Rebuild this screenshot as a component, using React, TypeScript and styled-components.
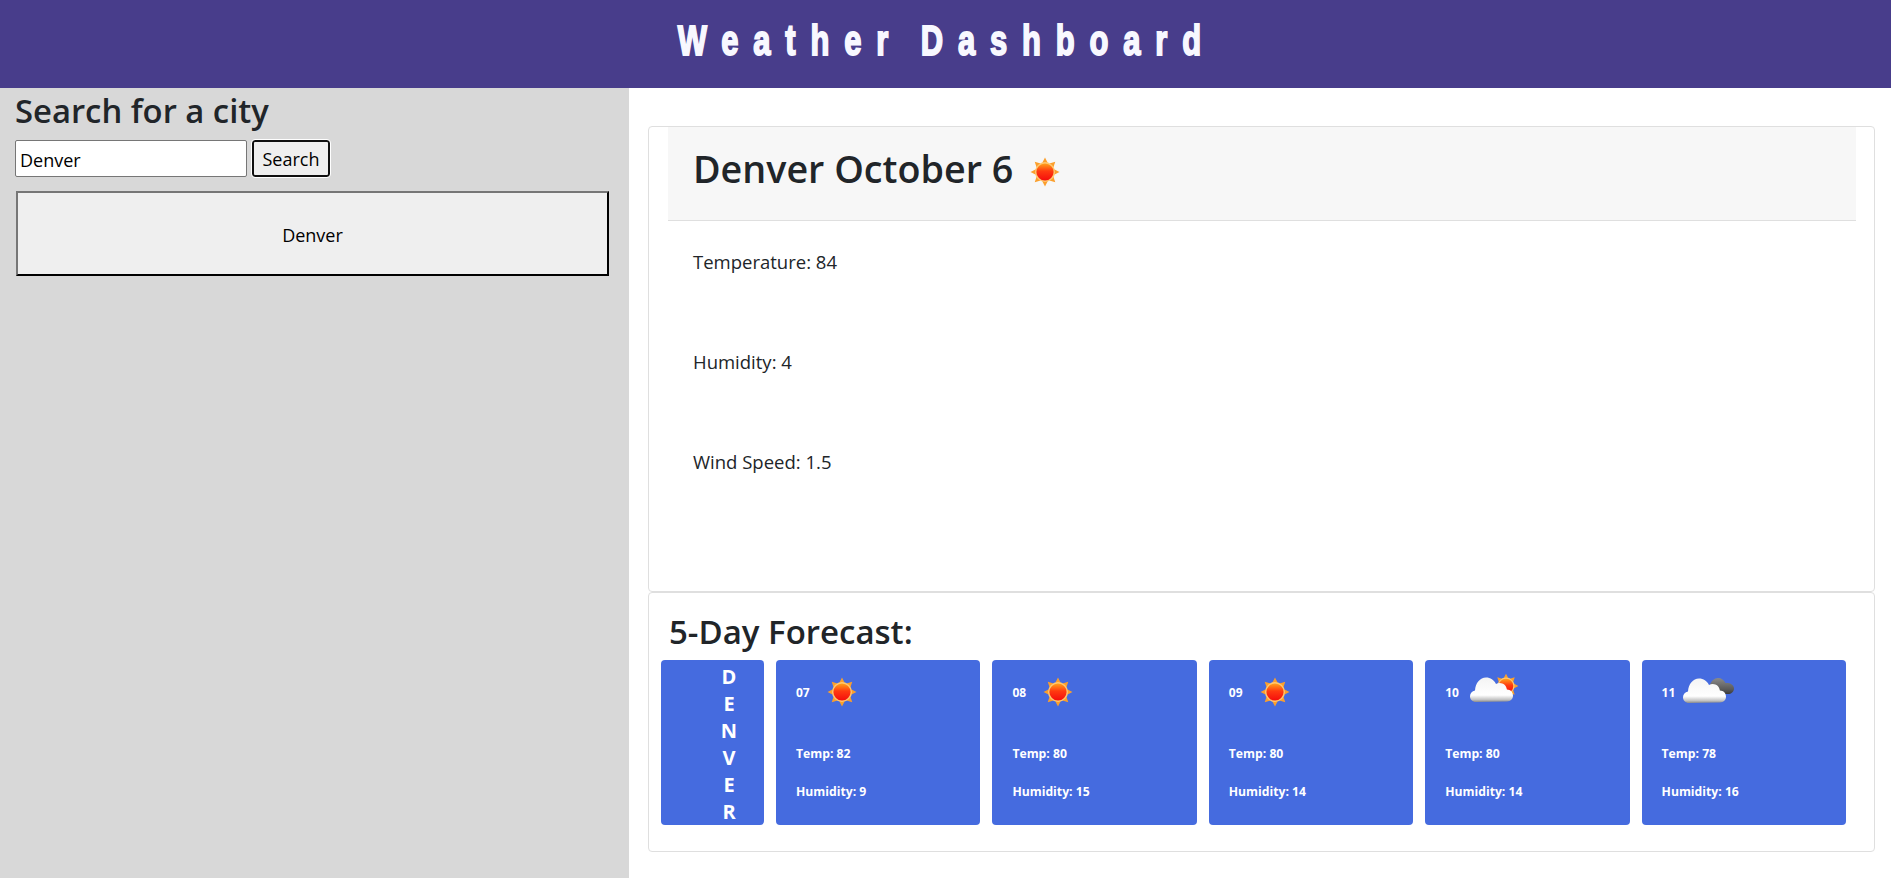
import React, { useId } from 'react';
import styled, { createGlobalStyle } from 'styled-components';

type Day = {
  date: string;
  icon: 'sun' | 'fewClouds' | 'brokenClouds';
  temp: number;
  humidity: number;
};

const days: Day[] = [
  { date: '07', icon: 'sun', temp: 82, humidity: 9 },
  { date: '08', icon: 'sun', temp: 80, humidity: 15 },
  { date: '09', icon: 'sun', temp: 80, humidity: 14 },
  { date: '10', icon: 'fewClouds', temp: 80, humidity: 14 },
  { date: '11', icon: 'brokenClouds', temp: 78, humidity: 16 },
];

const sunRays = (cx: number, cy: number, inner: number, outer: number, half: number) =>
  Array.from({ length: 8 }, (_, i) => {
    const a = (i * Math.PI) / 4;
    const tip = [cx + Math.cos(a) * outer, cy + Math.sin(a) * outer];
    const l = [cx + Math.cos(a - half) * inner, cy + Math.sin(a - half) * inner];
    const r = [cx + Math.cos(a + half) * inner, cy + Math.sin(a + half) * inner];
    return `${tip[0]},${tip[1]} ${l[0]},${l[1]} ${r[0]},${r[1]}`;
  });

const CLOUD =
  'M7 36c-3.500 0-6-2.600-6-5.800 0-3 2-5.200 5-5.800C6.500 17 11 11.500 17 11.500c4.500 0 8 2.500 10 6.500 1.200-.6 2.500-.9 3.700-.9 3.800 0 6.800 2.800 7.200 6.500 3.700 0 6.100 2.800 6.100 6.200 0 3.200-2.500 5.700-6 5.700z';

const Sun: React.FC<{ cx?: number; cy?: number; scale?: number }> = ({ cx = 25, cy = 25, scale = 1 }) => {
  const id = useId();
  return (
    <g>
      <defs>
        <linearGradient id={id} x1="0" y1="0" x2="0" y2="1">
          <stop offset="0" stopColor="#ffa31a" />
          <stop offset="0.45" stopColor="#ff3a10" />
          <stop offset="1" stopColor="#f40d0d" />
        </linearGradient>
      </defs>
      {sunRays(cx, cy, 9.5 * scale, 14.5 * scale, 0.3).map((points) => (
        <polygon key={points} points={points} fill="#fb9f2c" />
      ))}
      <circle cx={cx} cy={cy} r={10 * scale} fill="#ffc870" />
      <circle cx={cx} cy={cy} r={8.6 * scale} fill={`url(#${id})`} />
    </g>
  );
};

const WeatherIcon: React.FC<{ kind: Day['icon'] }> = ({ kind }) => {
  const id = useId();
  const darkId = useId();
  return (
    <Icon viewBox="0 0 50 50" aria-hidden="true">
      <defs>
        <linearGradient id={id} x1="0" y1="0" x2="0" y2="1">
          <stop offset="0" stopColor="#f4f4f4" />
          <stop offset="0.72" stopColor="#ffffff" />
          <stop offset="0.9" stopColor="#c4c4c4" />
          <stop offset="1" stopColor="#8b8b8b" />
        </linearGradient>
        <linearGradient id={darkId} x1="0" y1="0" x2="0" y2="1">
          <stop offset="0" stopColor="#8a8a8a" />
          <stop offset="0.7" stopColor="#5a5a5a" />
          <stop offset="1" stopColor="#3a3a3a" />
        </linearGradient>
      </defs>
      {kind === 'sun' && <Sun />}
      {kind === 'fewClouds' && (
        <>
          <Sun cx={40} cy={19} scale={0.85} />
          <path d={CLOUD} fill={`url(#${id})`} transform="translate(3 -1)" />
        </>
      )}
      {kind === 'brokenClouds' && (
        <>
          <path
            d="M30 27c-2-3-3-6-2-9 1-4 4.500-7 8-7 3.500 0 6 2 7.500 5 4-.5 8.500 1.500 8.500 5.500 0 3.500-3 5.500-6 5.500z"
            fill={`url(#${darkId})`}
          />
          <path d={CLOUD} fill={`url(#${id})`} />
        </>
      )}
    </Icon>
  );
};

const App: React.FC = () => {
  return (
    <>
      <GlobalStyle />
      <Header>
        <Title>Weather Dashboard</Title>
      </Header>
      <Main>
        <Sidebar>
          <SearchTitle>Search for a city</SearchTitle>
          <SearchForm>
            <SearchInput defaultValue="Denver" />
            <SearchButton type="button">Search</SearchButton>
          </SearchForm>
          <HistoryButton type="button">Denver</HistoryButton>
        </Sidebar>
        <Content>
          <CurrentCard>
            <CurrentHeader>
              <CityTitle>Denver October 6</CityTitle>
              <HeroIcon>
                <WeatherIcon kind="sun" />
              </HeroIcon>
            </CurrentHeader>
            <CurrentBody>
              <Stat>Temperature: 84</Stat>
              <Stat>Humidity: 4</Stat>
              <Stat>Wind Speed: 1.5</Stat>
            </CurrentBody>
          </CurrentCard>
          <ForecastCard>
            <ForecastTitle>5-Day Forecast:</ForecastTitle>
            <ForecastRow>
              <CityCard>
                {'DENVER'.split('').map((letter, i) => (
                  <span key={i}>{letter}</span>
                ))}
              </CityCard>
              {days.map((day) => (
                <DayCard key={day.date}>
                  <DayTop>
                    <DayDate>{day.date}</DayDate>
                    <WeatherIcon kind={day.icon} />
                  </DayTop>
                  <DayStat>Temp: {day.temp}</DayStat>
                  <DayStat>Humidity: {day.humidity}</DayStat>
                </DayCard>
              ))}
            </ForecastRow>
          </ForecastCard>
        </Content>
      </Main>
    </>
  );
};

export default App;

const GlobalStyle = createGlobalStyle`
  * {
    box-sizing: border-box;
  }

  body {
    margin: 0;
    background: #fff;
    color: #212529;
    font-family: "Open Sans", "Noto Sans", sans-serif;
    overflow: hidden;
  }
`;

const Header = styled.header`
  height: 88px;
  padding-bottom: 7px;
  background: #483d8b;
  display: flex;
  justify-content: center;
  align-items: center;
`;

const Title = styled.h1`
  margin: 0 0 0 2px;
  color: #f8f8ff;
  font-family: "Liberation Sans", sans-serif;
  font-size: 43px;
  font-weight: 700;
  letter-spacing: 20.6px;
  word-spacing: -8px;
  -webkit-text-stroke: 1.9px #f8f8ff;
  white-space: nowrap;
  transform: scaleX(0.72);
`;

const Main = styled.div`
  display: grid;
  grid-template-columns: 629px 1fr;
  height: 790px;
`;

const Sidebar = styled.aside`
  background: #d8d8d8;
  padding: 1px 19px 0 15px;
`;

const SearchTitle = styled.h3`
  margin: 0 0 7px;
  font-size: 32.8px;
  line-height: 44px;
  font-weight: 600;
`;

const SearchForm = styled.form`
  display: flex;
  align-items: center;
  gap: 5px;
  margin-bottom: 14px;
`;

const SearchInput = styled.input`
  width: 232px;
  height: 37px;
  padding: 2px 4px 0;
  border: 1px solid #767676;
  border-radius: 2px;
  background: #fff;
  color: #000;
  font: 18px "Open Sans", sans-serif;
`;

const SearchButton = styled.button`
  width: 78px;
  height: 37px;
  padding: 0;
  border: 2px solid #101010;
  border-radius: 3px;
  outline: 1px solid #fff;
  background: #efefef;
  color: #000;
  font: 18px "Open Sans", sans-serif;
`;

const HistoryButton = styled.button`
  display: block;
  width: 593px;
  height: 85px;
  margin-left: 1px;
  padding: 2px 0 0;
  border: 2px outset #222;
  border-color: #767676 #222 #222 #767676;
  background: #efefef;
  color: #000;
  font: 18px "Open Sans", sans-serif;
`;

const Content = styled.main`
  padding: 38px 16px 0 19px;
`;

const CurrentCard = styled.section`
  height: 466px;
  border: 1px solid #dfdfdf;
  border-radius: 4px;
  padding: 0 18px 0 19px;
`;

const CurrentHeader = styled.div`
  display: flex;
  align-items: center;
  height: 94px;
  padding-left: 25px;
  background: #f7f7f7;
  border-bottom: 1px solid #dfdfdf;
`;

const CityTitle = styled.h2`
  margin: 0 0 11px;
  font-size: 37.7px;
  font-weight: 600;
`;

const HeroIcon = styled.div`
  margin: 0 0 3px 7px;
  display: flex;
`;

const CurrentBody = styled.div`
  padding: 27px 0 0 25px;
`;

const Stat = styled.p`
  margin: 0 0 73px;
  font-size: 18.5px;
  line-height: 27px;
`;

const ForecastCard = styled.section`
  height: 260px;
  border: 1px solid #dfdfdf;
  border-radius: 4px;
  padding: 13px 0 0 12px;
`;

const ForecastTitle = styled.h3`
  margin: 0 0 3px 8px;
  font-size: 33px;
  line-height: 51px;
  font-weight: 600;
`;

const ForecastRow = styled.div`
  display: flex;
  gap: 12px;
`;

const CityCard = styled.div`
  width: 103px;
  height: 165px;
  padding: 3px 0 0 53px;
  border-radius: 4px;
  background: #456bdf;
  color: #fff;
  font-size: 20px;
  font-weight: 700;
  line-height: 27px;

  span {
    display: block;
    width: 30px;
    text-align: center;
  }
`;

const DayCard = styled.article`
  width: 204.4px;
  height: 165px;
  padding: 7px 20px 0;
  border-radius: 4px;
  background: #456bdf;
  color: #fff;
`;

const DayTop = styled.div`
  display: flex;
  align-items: center;
  gap: 7px;
  margin-bottom: 28px;
`;

const DayDate = styled.span`
  font-size: 12px;
  font-weight: 700;
`;

const Icon = styled.svg`
  width: 50px;
  height: 50px;
  flex: none;
  overflow: visible;
`;

const DayStat = styled.p`
  margin: 0 0 20px;
  font-size: 12.2px;
  font-weight: 700;
  line-height: 18px;
`;
